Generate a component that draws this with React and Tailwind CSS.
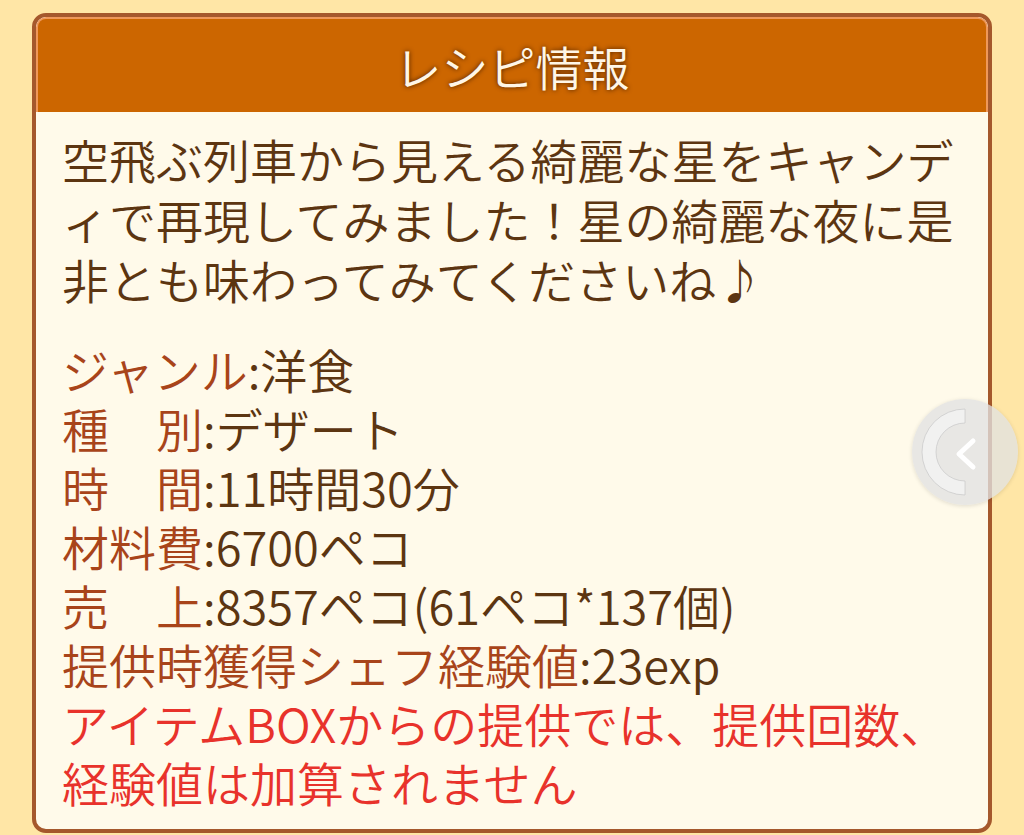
const specs = [
  { label: 'ジャンル', value: '洋食' },
  { label: '種　別', value: 'デザート' },
  { label: '時　間', value: '11時間30分' },
  { label: '材料費', value: '6700ペコ' },
  { label: '売　上', value: '8357ペコ(61ペコ*137個)' },
  { label: '提供時獲得シェフ経験値', value: '23exp' },
];

const BackButton = () => (
  <div className="absolute right-[6px] top-[399px] w-[106px] h-[106px] rounded-full bg-[rgba(226,226,226,0.78)] shadow-[0_1px_4px_rgba(0,0,0,0.12)]">
    <svg width="106" height="106" viewBox="0 0 106 106">
      <path
        d="M53 10 A43 43 0 0 0 53 96 L53 82 A29 29 0 0 1 53 24 Z"
        fill="rgba(242,242,242,0.85)"
        stroke="rgba(200,200,200,0.7)"
        strokeWidth="1"
      />
      <path
        d="M61 42 L47 55 L61 68"
        fill="none"
        stroke="#ffffff"
        strokeWidth="5"
        strokeLinecap="round"
        strokeLinejoin="round"
      />
    </svg>
  </div>
);

export default function App() {
  return (
    <div
      className="relative min-h-screen bg-[#ffe6a6] pt-[13px] px-[32px] overflow-hidden font-[350]"
      style={{ fontFamily: '"Noto Sans CJK JP", "Noto Sans", sans-serif' }}
    >
      <div className="rounded-[14px] border-[4px] border-[#a5582c] bg-[#fffaea] overflow-hidden">
        <div className="h-[95px] bg-[#cc6600] border-t-2 border-x-2 border-[#ef985a] rounded-t-[10px] flex items-center justify-center">
          <h1 className="text-[47px] leading-none text-[#fff6e6] [text-shadow:0_0_5px_rgba(70,30,0,1)]">
            レシピ情報
          </h1>
        </div>

        <div className="px-[26px] pt-[17px] pb-[18px] text-[47px] text-[#5c3511]">
          <p className="leading-[60px]">
            空飛ぶ列車から見える綺麗な星をキャンディで再現してみました！星の綺麗な夜に是非とも味わってみてくださいね♪
          </p>

          <div className="mt-[30px] leading-[59px]">
            {specs.map((s) => (
              <div key={s.label} className="whitespace-nowrap">
                <span className="text-[#a8441a]">{s.label}</span>
                <span>:{s.value}</span>
              </div>
            ))}
            <p className="text-[#e8322b]">
              アイテムBOXからの提供では、提供回数、経験値は加算されません
            </p>
          </div>
        </div>
      </div>

      <BackButton />
    </div>
  );
}
